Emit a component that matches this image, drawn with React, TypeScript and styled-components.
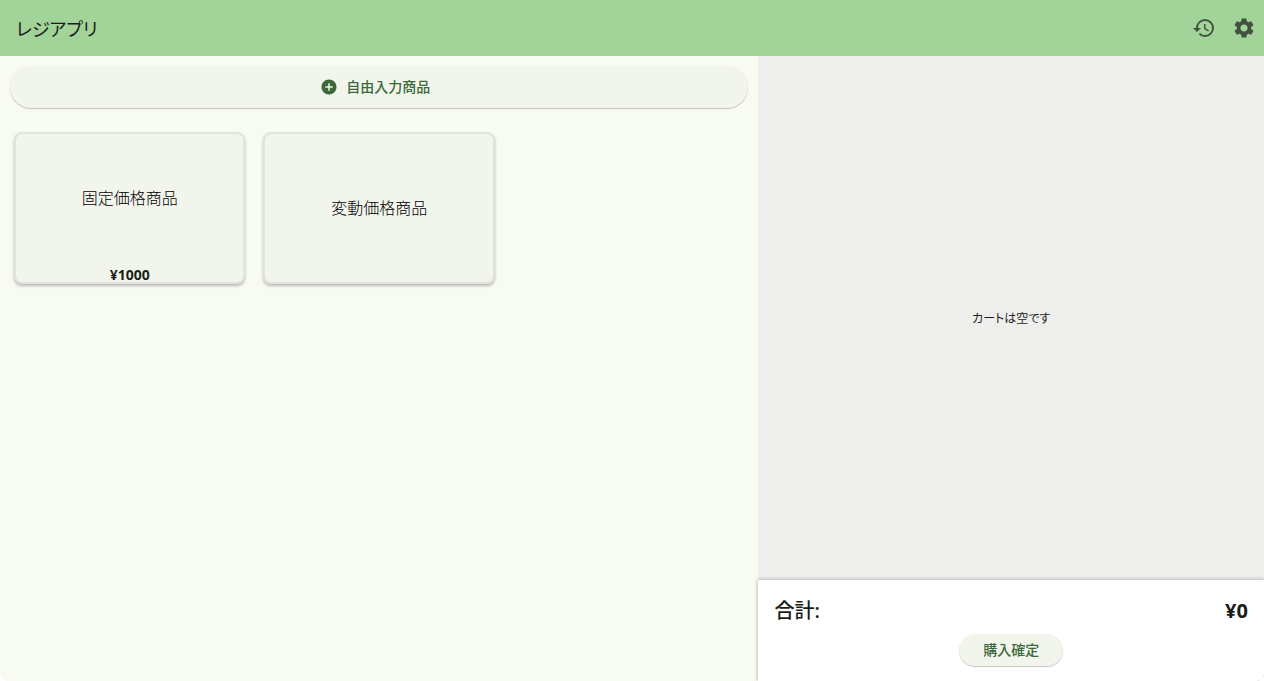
import React from 'react';
import styled, { createGlobalStyle } from 'styled-components';
import { MdAddCircle, MdHistory, MdSettings } from 'react-icons/md';

const GlobalStyle = createGlobalStyle`
  *, *::before, *::after { box-sizing: border-box; }
  html, body, #root { height: 100%; margin: 0; }
  body {
    background: #ffffff;
    color: #191d17;
    font-family: "Noto Sans", "Noto Sans CJK JP", sans-serif;
    font-size: 14px;
  }
  button { font: inherit; color: inherit; border: 0; margin: 0; cursor: pointer; }
`;

const Page = styled.div`
  display: flex;
  flex-direction: column;
  min-height: 100%;
  background: #f8fbf2;
  border-radius: 0 0 8px 8px;
  overflow: hidden;
`;

const AppBar = styled.header`
  display: flex;
  align-items: center;
  justify-content: space-between;
  height: 56px;
  padding-left: 16px;
  background: #a2d399;
`;

const Title = styled.h1`
  margin: 0;
  font-family: "Noto Sans CJK JP", sans-serif;
  font-size: 18px;
  font-weight: 400;
  line-height: 28px;
  font-feature-settings: "palt";
`;

const Actions = styled.div`
  display: flex;
`;

const IconButton = styled.button`
  display: grid;
  place-items: center;
  width: 40px;
  height: 40px;
  padding: 0;
  border-radius: 50%;
  background: transparent;
  color: #42523f;
`;

const Content = styled.div`
  display: grid;
  grid-template-columns: 3fr 2fr;
  flex: 1;
`;

const Products = styled.main`
  display: flex;
  flex-direction: column;
  gap: 24px;
  min-width: 0;
  padding: 10px;
`;

const PillButton = styled.button`
  display: flex;
  align-items: center;
  justify-content: center;
  gap: 8px;
  height: 32px;
  padding: 0 24px;
  border-radius: 999px;
  background: #f2f5ec;
  color: #3b693a;
  font-weight: 500;
  line-height: 20px;
  box-shadow: 0 1px 1px rgba(0, 0, 0, 0.22);
`;

const WideButton = styled(PillButton)`
  height: 42px;
  padding-left: 16px;
`;

const ProductGrid = styled.div`
  display: grid;
  grid-template-columns: repeat(3, 1fr);
  gap: 18px;
  padding: 0 4px;
`;

const ProductCard = styled.button`
  display: flex;
  flex-direction: column;
  aspect-ratio: 232 / 152;
  padding: 0;
  border: 2px solid #e0e3e0;
  border-radius: 8px;
  background: #f2f5ec;
  box-shadow: 0 2px 3px rgba(0, 0, 0, 0.26);
`;

const ProductName = styled.span`
  display: grid;
  place-items: center;
  flex: 1;
  width: 100%;
  color: #000000;
  font-size: 16px;
  font-weight: 300;
  line-height: 24px;
`;

const Price = styled.span`
  width: 100%;
  padding-top: 6px;
  font-size: 14px;
  font-weight: 700;
  line-height: 14px;
  text-align: center;
`;

const Cart = styled.aside`
  display: flex;
  flex-direction: column;
  min-width: 0;
  background: #eeeeec;
`;

const EmptyMessage = styled.p`
  display: grid;
  place-items: center;
  flex: 1;
  margin: 0;
  font-family: "Noto Sans CJK JP", sans-serif;
  font-size: 12px;
  line-height: 20px;
  font-feature-settings: "palt";
`;

const Checkout = styled.section`
  display: flex;
  flex-direction: column;
  align-items: center;
  gap: 8px;
  padding: 16px 16px 15px;
  background: #ffffff;
  box-shadow: 0 0 4px rgba(0, 0, 0, 0.35);
`;

const Total = styled.div`
  display: flex;
  justify-content: space-between;
  width: 100%;
  font-size: 20px;
  font-weight: 700;
  line-height: 30px;
`;

const TotalLabel = styled.span`
  font-weight: 500;
`;

interface Product {
  name: string;
  price?: number;
}

const products: Product[] = [
  { name: '固定価格商品', price: 1000 },
  { name: '変動価格商品' },
];

export default function App() {
  return (
    <>
      <GlobalStyle />
      <Page>
        <AppBar>
          <Title>レジアプリ</Title>
          <Actions>
            <IconButton type="button" aria-label="履歴"><MdHistory size={24} /></IconButton>
            <IconButton type="button" aria-label="設定"><MdSettings size={24} /></IconButton>
          </Actions>
        </AppBar>
        <Content>
          <Products>
            <WideButton type="button">
              <MdAddCircle size={18} />
              自由入力商品
            </WideButton>
            <ProductGrid>
              {products.map(({ name, price }) => (
                <ProductCard type="button" key={name}>
                  <ProductName>{name}</ProductName>
                  {price !== undefined && <Price>¥{price}</Price>}
                </ProductCard>
              ))}
            </ProductGrid>
          </Products>
          <Cart>
            <EmptyMessage>カートは空です</EmptyMessage>
            <Checkout>
              <Total>
                <TotalLabel>合計:</TotalLabel>
                <span>¥0</span>
              </Total>
              <PillButton type="button">購入確定</PillButton>
            </Checkout>
          </Cart>
        </Content>
      </Page>
    </>
  );
}
